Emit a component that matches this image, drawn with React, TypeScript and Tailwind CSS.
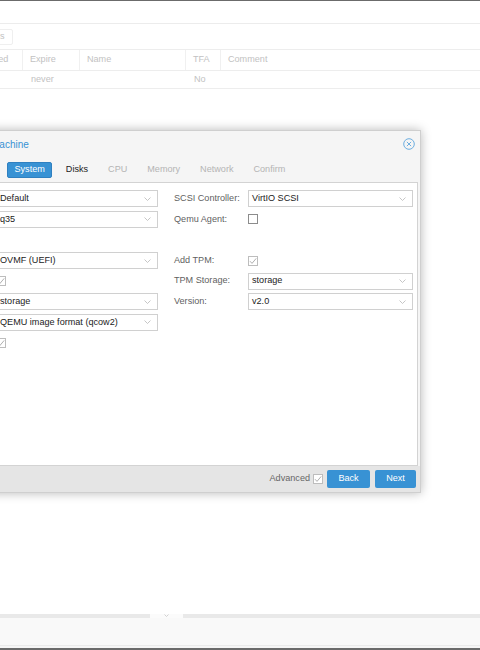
import React from 'react';

const Chevron = () => (
  <svg width="7" height="4" viewBox="0 0 7 4" className="shrink-0">
    <polyline points="0.5,0.5 3.5,3.5 6.5,0.5" fill="none" stroke="#b8b8b8" strokeWidth="0.8" />
  </svg>
);

const Combo = ({ value }: { value: string }) => (
  <div className="h-[17px] flex items-center justify-between border border-[#d0d0d0] bg-white pl-[3px] pr-[6px] text-[#222]">
    <span>{value}</span>
    <Chevron />
  </div>
);

const Check = ({ checked = false, dark = false }: { checked?: boolean; dark?: boolean }) => (
  <div
    className={`w-[10px] h-[10px] border bg-white flex items-center justify-center ${
      dark ? 'border-[#8c8c8c]' : 'border-[#bdbdbd]'
    }`}
  >
    {checked && (
      <svg width="8" height="8" viewBox="0 0 8 8">
        <polyline points="1,4.2 3,6.4 7.2,1.4" fill="none" stroke="#a6a6a6" strokeWidth="0.9" />
      </svg>
    )}
  </div>
);

type Field = { label: string; combo?: string; check?: 'on' | 'off' } | null;

const leftFields: Field[] = [
  { label: 'Graphic card:', combo: 'Default' },
  { label: 'Machine:', combo: 'q35' },
  null,
  { label: 'BIOS:', combo: 'OVMF (UEFI)' },
  { label: 'Add EFI Disk:', check: 'on' },
  { label: 'EFI Storage:', combo: 'storage' },
  { label: 'Format:', combo: 'QEMU image format (qcow2)' },
  { label: 'Pre-Enroll keys:', check: 'on' },
];

const rightFields: Field[] = [
  { label: 'SCSI Controller:', combo: 'VirtIO SCSI' },
  { label: 'Qemu Agent:', check: 'off' },
  null,
  { label: 'Add TPM:', check: 'on' },
  { label: 'TPM Storage:', combo: 'storage' },
  { label: 'Version:', combo: 'v2.0' },
];

const FieldColumn = ({ fields }: { fields: Field[] }) => (
  <div className="flex flex-col">
    {fields.map((f, i) =>
      f ? (
        <div key={i} className="grid grid-cols-[74px_1fr] items-center h-[20.6px]">
          <span className="text-[#5f5f5f] whitespace-nowrap">{f.label}</span>
          {f.combo ? <Combo value={f.combo} /> : <Check checked={f.check === 'on'} dark={f.check === 'off'} />}
        </div>
      ) : (
        <div key={i} className="h-[20.6px]" />
      )
    )}
  </div>
);

const tabs = [
  { name: 'General', state: 'done' },
  { name: 'OS', state: 'done' },
  { name: 'System', state: 'active' },
  { name: 'Disks', state: 'enabled' },
  { name: 'CPU', state: 'disabled' },
  { name: 'Memory', state: 'disabled' },
  { name: 'Network', state: 'disabled' },
  { name: 'Confirm', state: 'disabled' },
];

export default function App() {
  return (
    <div className="relative w-[480px] h-[650px] overflow-hidden bg-white font-['Liberation_Sans',Arial,sans-serif] text-[9.1px]">
      {/* background user list, faded by the modal mask */}
      <div className="flex flex-col h-full text-[#c2c2c2]">
        <div className="h-px bg-[#6b6b6b]" />
        <div className="h-[22px]" />
        <div className="h-[26px] border-t border-[#ececec] flex items-center">
          <div className="h-[16px] -ml-[52px] pl-[6px] pr-[7px] flex items-center border border-[#efefef] rounded-[2px]">
            Permissions
          </div>
        </div>
        <div className="h-[22px] border-t border-b border-[#ededed] flex -ml-[32px]">
          <div className="w-[55px] pl-[7px] flex items-center border-r border-[#f0f0f0]">Enabled</div>
          <div className="w-[57px] pl-[7px] flex items-center border-r border-[#f0f0f0]">Expire</div>
          <div className="w-[106px] pl-[7px] flex items-center border-r border-[#f0f0f0]">Name</div>
          <div className="w-[35px] pl-[7px] flex items-center border-r border-[#f0f0f0]">TFA</div>
          <div className="flex-1 pl-[7px] flex items-center">Comment</div>
        </div>
        <div className="h-[18px] border-b border-[#ededed] flex -ml-[32px]">
          <div className="w-[55px]" />
          <div className="w-[57px] pl-[8px] flex items-center">never</div>
          <div className="w-[106px]" />
          <div className="w-[35px] pl-[8px] flex items-center">No</div>
          <div className="flex-1" />
        </div>
        <div className="flex-1" />
        <div className="h-[4px] flex">
          <div className="w-[150px] bg-[#e9e9e9]" />
          <div className="w-[33px] bg-[#fbfbfb] flex items-start justify-center">
            <svg width="5" height="3" viewBox="0 0 5 3">
              <polyline points="0.5,0.5 2.5,2.5 4.5,0.5" fill="none" stroke="#c8c8c8" strokeWidth="0.8" />
            </svg>
          </div>
          <div className="flex-1 bg-[#e9e9e9]" />
        </div>
        <div className="h-[28px] bg-[#f9f9f9] border-b border-[#ebebeb]" />
        <div className="h-[2px] bg-[#f6f6f6]" />
        <div className="h-[2px] bg-[#6b6b6b]" />
      </div>

      {/* wizard window */}
      <div className="absolute left-[-100px] top-[130px] w-[521px] h-[363px] flex flex-col border border-[#cfcfcf] bg-[#f5f5f5] shadow-[0_0_10px_rgba(0,0,0,0.28)]">
        <div className="h-[26px] flex items-center justify-between pl-[23.5px] pr-[5px]">
          <span className="text-[10px] text-[#3892d4]">Create: Virtual Machine</span>
          <svg width="12" height="12" viewBox="0 0 12 12">
            <circle cx="6" cy="6" r="5.3" fill="none" stroke="#5fa6dc" strokeWidth="0.9" />
            <path d="M3.9 3.9 L8.1 8.1 M8.1 3.9 L3.9 8.1" stroke="#5fa6dc" strokeWidth="0.9" />
          </svg>
        </div>
        <div className="h-[25px] flex items-center gap-[7px] pl-[20.5px]">
          {tabs.map((t) => (
            <div
              key={t.name}
              className={`h-[16px] px-[6.5px] flex items-center rounded-[2px] ${
                t.state === 'active'
                  ? 'bg-[#3892d4] text-white border border-[#2f80c0]'
                  : t.state === 'disabled'
                  ? 'text-[#b4b4b4]'
                  : 'text-[#222]'
              }`}
            >
              {t.name}
            </div>
          ))}
        </div>
        <div className="h-[284px] mx-[2px] bg-white border border-[#d3d3d3] pt-[5.5px] pl-[18px] pr-[4px]">
          <div className="grid grid-cols-[236px_239px] gap-x-[16px]">
            <FieldColumn fields={leftFields} />
            <FieldColumn fields={rightFields} />
          </div>
        </div>
        <div className="h-[26px] bg-[#e5e5e5] flex items-center justify-end pr-[4px]">
          <span className="text-[#666]">Advanced</span>
          <div className="ml-[3px]">
            <Check checked />
          </div>
          <div className="ml-[4px] w-[43px] h-[18px] rounded-[2px] bg-[#3892d4] text-white flex items-center justify-center">
            Back
          </div>
          <div className="ml-[5px] w-[41px] h-[18px] rounded-[2px] bg-[#3892d4] text-white flex items-center justify-center">
            Next
          </div>
        </div>
      </div>
    </div>
  );
}
